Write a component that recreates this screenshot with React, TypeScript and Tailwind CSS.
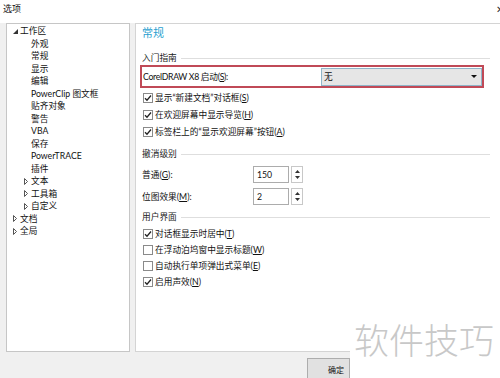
import React from "react";

const U = ({ c }: { c: string }) => <span className="underline underline-offset-[1px]">{c}</span>;

function OpenArrow() {
  return (
    <svg width="5" height="5" viewBox="0 0 5 5" className="block shrink-0">
      <polygon points="5,0 5,5 0,5" fill="#333" />
    </svg>
  );
}
function ClosedArrow() {
  return (
    <svg width="4" height="7" viewBox="0 0 4 7" className="block shrink-0">
      <polygon points="0.5,0.5 3.5,3.5 0.5,6.5" fill="none" stroke="#555" strokeWidth="1" />
    </svg>
  );
}

type Node = { label: string; level: number; arrow?: "open" | "closed" };
const tree: Node[] = [
  { label: "工作区", level: 0, arrow: "open" },
  { label: "外观", level: 1 },
  { label: "常规", level: 1 },
  { label: "显示", level: 1 },
  { label: "编辑", level: 1 },
  { label: "PowerClip 图文框", level: 1 },
  { label: "贴齐对象", level: 1 },
  { label: "警告", level: 1 },
  { label: "VBA", level: 1 },
  { label: "保存", level: 1 },
  { label: "PowerTRACE", level: 1 },
  { label: "插件", level: 1 },
  { label: "文本", level: 1, arrow: "closed" },
  { label: "工具箱", level: 1, arrow: "closed" },
  { label: "自定义", level: 1, arrow: "closed" },
  { label: "文档", level: 0, arrow: "closed" },
  { label: "全局", level: 0, arrow: "closed" },
];

function TreeRow({ n }: { n: Node }) {
  return (
    <div className={`flex min-h-0 items-center overflow-visible ${n.level === 0 ? "pl-[6px]" : "pl-[17px]"}`}>
      <div className="flex w-[7px] shrink-0 items-center justify-start">
        {n.arrow === "open" && <OpenArrow />}
        {n.arrow === "closed" && <ClosedArrow />}
      </div>
      <span className="whitespace-nowrap leading-[12px]">{n.label}</span>
    </div>
  );
}

function Check({ checked }: { checked: boolean }) {
  return (
    <div className="flex h-[10px] w-[10px] shrink-0 items-center justify-center border border-[#8a8a8a] bg-white">
      {checked && (
        <svg width="8" height="8" viewBox="0 0 8 8">
          <polyline points="1,4.2 3,6.2 7,1.5" fill="none" stroke="#222" strokeWidth="1.3" />
        </svg>
      )}
    </div>
  );
}

function CheckRow({ checked, children, h }: { checked: boolean; children: React.ReactNode; h: string }) {
  return (
    <div className={`flex items-center gap-[2px] pl-[1px] ${h}`}>
      <Check checked={checked} />
      <span className="leading-[12px]">{children}</span>
    </div>
  );
}

function GroupLabel({ children, mt }: { children: React.ReactNode; mt: string }) {
  return (
    <div className={`flex h-[12px] items-center gap-[4px] pr-[10px] ${mt}`}>
      <span className="leading-[12px] text-[#222]">{children}</span>
      <div className="h-px flex-1 bg-[#dedede]" />
    </div>
  );
}

function Spinner({ value }: { value: string }) {
  return (
    <div className="flex h-[17px] items-stretch gap-[2px]">
      <div className="flex w-[36px] items-center border border-[#acacac] bg-white pl-[3px]">
        <span className="leading-[12px]">{value}</span>
      </div>
      <div className="flex w-[12px] flex-col items-center justify-center gap-[3px] border border-[#c8c8c8] bg-white">
        <svg width="5" height="3" viewBox="0 0 5 3">
          <polygon points="2.5,0 5,3 0,3" fill="#333" />
        </svg>
        <svg width="5" height="3" viewBox="0 0 5 3">
          <polygon points="0,0 5,0 2.5,3" fill="#333" />
        </svg>
      </div>
    </div>
  );
}

export default function App() {
  return (
    <div className="relative flex h-[378px] w-[500px] flex-col overflow-hidden bg-[#f0f0f0] font-['Lato','Noto_Sans_CJK_SC',sans-serif] text-[8.7px] leading-[12px] text-[#111]">
      {/* title bar */}
      <div className="flex h-[23px] shrink-0 items-start justify-between bg-white pl-[3px] pt-[3px]">
        <span className="text-[9px] leading-[12px]">选项</span>
        <span className="mr-[-4px] text-[10px] leading-[12px] text-[#333]">✕</span>
      </div>

      {/* main */}
      <div className="flex h-[329px] shrink-0 gap-[5px] pl-[6px]">
        {/* tree */}
        <div className="h-full w-[124px] shrink-0 border border-[#c6c6c6] bg-white pt-[1px]">
          <div className="grid grid-rows-[repeat(17,12.5px)]">
            {tree.map((n, i) => (
              <TreeRow key={i} n={n} />
            ))}
          </div>
        </div>

        {/* right panel */}
        <div className="h-full flex-1 border-b border-l border-t border-[#d4d4d4] bg-white pl-[6px]">
          <div className="pt-[2px] text-[11px] leading-[14px] text-[#2a9fd0]">常规</div>

          <GroupLabel mt="mt-[12px]">入门指南</GroupLabel>

          <div className="mt-[1px] ml-[-2px] flex h-[23px] w-[344px] items-center justify-between border-2 border-[#c04a57] pl-[1px]">
            <span className="leading-[12px] tracking-[-0.3px]">
              CorelDRAW X8 启动(<U c="S" />):
            </span>
            <div className="flex h-[18px] w-[161px] items-center justify-between border border-[#8fb5c9] bg-[#e6e6e6] pl-[2px] pr-[4px]">
              <span className="leading-[12px]">无</span>
              <svg width="6" height="3" viewBox="0 0 6 3">
                <polygon points="0,0 6,0 3,3" fill="#111" />
              </svg>
            </div>
          </div>

          <div className="mt-[2px]">
            <CheckRow checked h="h-[16.7px]">
              显示“新建文档”对话框(<U c="S" />)
            </CheckRow>
            <CheckRow checked h="h-[16.7px]">
              在欢迎屏幕中显示导览(<U c="H" />)
            </CheckRow>
            <CheckRow checked h="h-[16.7px]">
              标签栏上的“显示欢迎屏幕”按钮(<U c="A" />)
            </CheckRow>
          </div>

          <GroupLabel mt="mt-[8px]">撤消级别</GroupLabel>

          <div className="mt-[6px] flex h-[17px] items-center">
            <span className="w-[111px] leading-[12px]">
              普通(<U c="G" />):
            </span>
            <Spinner value="150" />
          </div>
          <div className="mt-[5px] flex h-[17px] items-center">
            <span className="w-[111px] leading-[12px]">
              位图效果(<U c="M" />):
            </span>
            <Spinner value="2" />
          </div>

          <GroupLabel mt="mt-[6px]">用户界面</GroupLabel>

          <div className="mt-[3px]">
            <CheckRow checked h="h-[16px]">
              对话框显示时居中(<U c="T" />)
            </CheckRow>
            <CheckRow checked={false} h="h-[16px]">
              在浮动泊坞窗中显示标题(<U c="W" />)
            </CheckRow>
            <CheckRow checked={false} h="h-[16px]">
              自动执行单项弹出式菜单(<U c="E" />)
            </CheckRow>
            <CheckRow checked h="h-[16px]">
              启用声效(<U c="N" />)
            </CheckRow>
          </div>
        </div>
      </div>

      {/* bottom bar */}
      <div className="flex flex-1 items-start pl-[307px] pt-[6px]">
        <div className="flex h-[24px] w-[43px] items-center justify-end border border-[#adadad] bg-[#e1e1e1] pr-[5px]">
          <span className="text-[8px] leading-[12px]">确定</span>
        </div>
      </div>

      {/* watermark */}
      <div className="absolute left-[350px] top-[318px] h-[60px] w-[150px] bg-white">
        <span className="absolute left-[4px] top-[3px] whitespace-nowrap font-['Noto_Sans_CJK_SC',sans-serif] text-[35px] font-light leading-[35px] text-[#c8c8c8]">
          软件技巧
        </span>
      </div>
    </div>
  );
}
